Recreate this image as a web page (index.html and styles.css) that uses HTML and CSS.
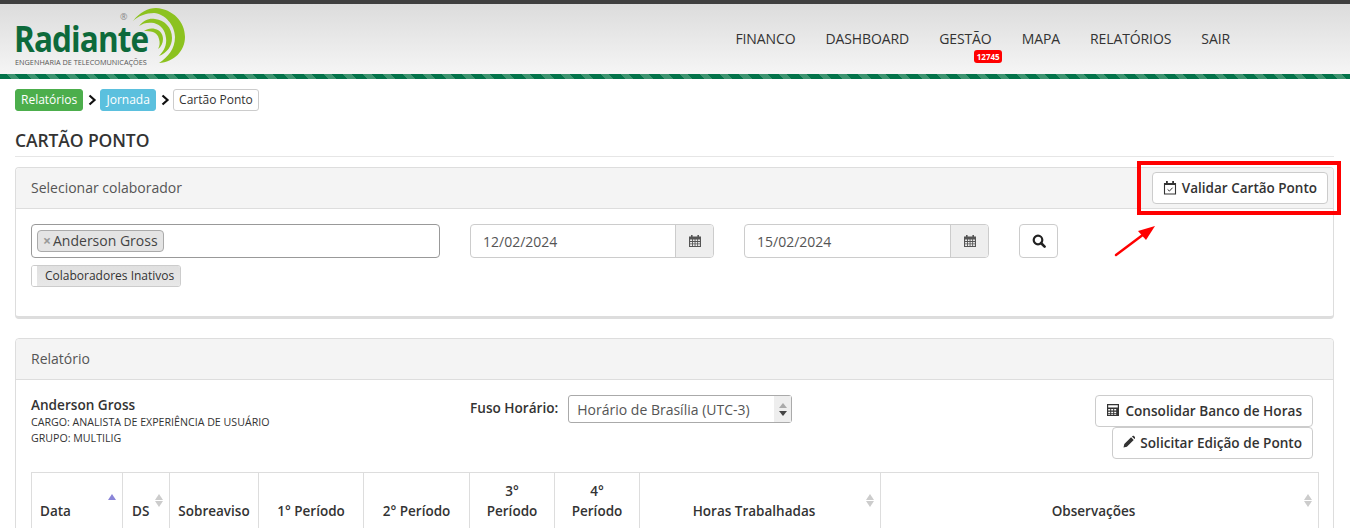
FILE: index.html
```html
<!DOCTYPE html>
<html lang="pt-BR">
<head>
  <meta charset="UTF-8" />
  <title>Cartão Ponto</title>
  <link rel="stylesheet" href="styles.css">
</head>
<body>
  <header class="topbar">
    <div class="logo">
      <span class="logo-name">Radiante</span>
      <span class="logo-sub">ENGENHARIA DE TELECOMUNICAÇÕES</span>
      <span class="logo-reg">®</span>
      <svg class="logo-arcs" viewBox="0 0 70 65" width="70" height="65">
        <path fill="#8cc21f" d="M13 16C20 7 28 3 36 3C53 4 65 17 65 32C65 46 54 57 39 58C48 52 55 44 55 32C55 20 45 9 34 8C26 8 18 11 13 16Z"/>
        <path fill="#8cc21f" d="M19 21C24 15 29 13 35 14C45 15 52 23 52 33C52 41 47 48 39 51C44 46 47 40 46 33C45 25 41 20 34 18C28 17 23 18 19 21Z"/>
        <path fill="#8cc21f" d="M24 26C27 24 31 23 35 24C40 25 43 29 43 34C43 38 41 42 38 44C40 41 40 37 39 34C38 30 36 28 33 27C30 26 27 26 24 26Z"/>
      </svg>
    </div>
    <nav class="menu">
      <a>Financo</a>
      <a>Dashboard</a>
      <a class="has-badge">Gestão<span class="badge">12745</span></a>
      <a>Mapa</a>
      <a>Relatórios</a>
      <a>Sair</a>
    </nav>
  </header>
  <div class="stripes"></div>

  <main class="content">
    <div class="crumbs">
      <span class="crumb crumb-green">Relatórios</span>
      <svg class="chev" viewBox="0 0 10 12" width="10" height="12"><path d="M2.5 1.5L7.5 6L2.5 10.5" /></svg>
      <span class="crumb crumb-blue">Jornada</span>
      <svg class="chev" viewBox="0 0 10 12" width="10" height="12"><path d="M2.5 1.5L7.5 6L2.5 10.5" /></svg>
      <span class="crumb crumb-plain">Cartão Ponto</span>
    </div>

    <h1 class="page-title">CARTÃO PONTO</h1>

    <section class="panel panel-select">
      <div class="panel-head">
        <span>Selecionar colaborador</span>
        <button class="btn btn-validate">
          <svg viewBox="0 0 14 15" width="14" height="15" class="ico"><path fill="none" stroke="#333" stroke-width="1.100" d="M1.500 3.500h11v10.500h-11z"/><path fill="#333" d="M1 3h12v2H1zM3 1h1.800v3H3zM9.200 1H11v3H9.200z"/><path fill="none" stroke="#333" d="M4.600 9.400l1.800 1.700 3.200-3.400"/></svg>
          Validar Cartão Ponto
        </button>
      </div>
      <div class="panel-body select-body">
        <div class="select-left">
          <div class="tag-input"><span class="tag"><i>×</i>Anderson Gross</span></div>
          <div class="toggle"><span class="toggle-knob"></span><span class="toggle-label">Colaboradores Inativos</span></div>
        </div>
        <div class="date-group">
          <span class="date-value">12/02/2024</span>
          <span class="date-addon"><svg viewBox="0 0 14 14" width="14" height="14"><use href="#cal"/></svg></span>
        </div>
        <div class="date-group">
          <span class="date-value">15/02/2024</span>
          <span class="date-addon"><svg viewBox="0 0 14 14" width="14" height="14"><use href="#cal"/></svg></span>
        </div>
        <button class="btn btn-search">
          <svg viewBox="0 0 14 14" width="14" height="14"><circle cx="6" cy="6" r="4.300" fill="none" stroke="#222" stroke-width="2.200"/><path d="M9 9l3.600 3.600" stroke="#222" stroke-width="2.600" stroke-linecap="round"/></svg>
        </button>
      </div>
    </section>

    <section class="panel panel-report">
      <div class="panel-head panel-head-plain"><span>Relatório</span></div>
      <div class="panel-body">
        <div class="report-top">
          <div class="person">
            <div class="person-name">Anderson Gross</div>
            <div class="person-meta">CARGO: ANALISTA DE EXPERIÊNCIA DE USUÁRIO</div>
            <div class="person-meta">GRUPO: MULTILIG</div>
          </div>
          <div class="zone">
            <span class="zone-label">Fuso Horário:</span>
            <div class="zone-select">
              <span>Horário de Brasília (UTC-3)</span>
              <span class="zone-spin"><b class="up"></b><b class="down"></b></span>
            </div>
          </div>
          <div class="report-actions">
            <button class="btn">
              <svg viewBox="0 0 14 14" width="14" height="14" class="ico"><path fill="#333" d="M1 1h12v12H1zM2.200 2.200v2.400h9.600V2.200zM2.200 6v1.600h2V6zm3 0v1.600h2V6zm3 0v1.600h2V6zm-6 2.800v1.400h2V8.800zm3 0v1.400h2V8.800zm3 0v1.400h2V8.800zm-6 2.400v.7h2v-.7zm3 0v.7h2v-.7zm3 0v.7h2v-.7z" fill-rule="evenodd"/></svg>
              Consolidar Banco de Horas
            </button>
            <button class="btn">
              <svg viewBox="1 0 12 14" width="12" height="14" class="ico"><path fill="#333" d="M1.500 12.500l.8-3.400 6.800-6.800 2.600 2.600-6.800 6.800zM9.900 1.500l.8-.6c.4-.3.900-.3 1.200 0l1.200 1.200c.3.3.3.8 0 1.200l-.6.800z"/></svg>
              Solicitar Edição de Ponto
            </button>
          </div>
        </div>

        <table class="grid">
          <thead>
            <tr>
              <th class="col-data th-left">Data<span class="sort sort-active"><b class="up"></b></span></th>
              <th class="col-ds th-left">DS<span class="sort"><b class="up"></b><b class="down"></b></span></th>
              <th class="col-sob">Sobreaviso</th>
              <th class="col-p1">1° Período</th>
              <th class="col-p2">2° Período</th>
              <th class="col-p3">3°<br>Período</th>
              <th class="col-p4">4°<br>Período</th>
              <th class="col-horas has-sort">Horas Trabalhadas<span class="sort"><b class="up"></b><b class="down"></b></span></th>
              <th class="col-obs has-sort">Observações<span class="sort"><b class="up"></b><b class="down"></b></span></th>
            </tr>
          </thead>
        </table>
      </div>
    </section>
  </main>

  <!-- destaque desenhado por cima do print -->
  <div class="callout"></div>
  <svg class="callout-arrow" viewBox="0 0 44 36" width="44" height="36">
    <path d="M2 33L30 12" stroke="#f00" stroke-width="2.400" stroke-linecap="round"/>
    <path fill="#f00" d="M41 4L24 9L32 18Z"/>
  </svg>

  <svg class="defs" width="0" height="0">
    <symbol id="cal" viewBox="0 0 14 14">
      <path fill="#555" fill-rule="evenodd" d="M1 2.400h2V1h1.600v1.400h4.800V1H11v1.400h2V13H1zM2.100 5.400v1.600h1.900V5.400zm2.800 0v1.600h1.700V5.400zm2.600 0v1.600h1.700V5.400zm2.600 0v1.600h1.800V5.400zM2.100 7.900v1.500h1.900V7.900zm2.800 0v1.500h1.700V7.900zm2.600 0v1.500h1.700V7.900zm2.600 0v1.500h1.800V7.900zM2.100 10.200v1.700h1.900v-1.700zm2.800 0v1.700h1.700v-1.700zm2.600 0v1.700h1.700v-1.700zm2.600 0v1.700h1.800v-1.700z"/>
    </symbol>
  </svg>
</body>
</html>
```

FILE: styles.css
```css
* {
  box-sizing: border-box;
}
html {
  height: 100%;
  overflow: hidden;
}
body {
  margin: 0;
  height: 100%;
  overflow: hidden;
  position: relative;
  background: #fff;
  color: #333;
  font-family: "Open Sans", sans-serif;
  font-size: 14px;
}
.topbar {
  height: 74px;
  border-top: 4px solid #3f3f3f;
  background: linear-gradient(to bottom, #dcdcdc, #f5f5f5);
  display: flex;
  align-items: center;
  justify-content: space-between;
}
.stripes {
  height: 5px;
  background: repeating-linear-gradient(45deg, #03734a 0 8px, #3d9470 8px 14px);
}
.logo {
  position: relative;
  width: 190px;
  height: 70px;
}
.logo-name {
  position: absolute;
  left: 14px;
  top: 18px;
  font-size: 35px;
  line-height: 34px;
  font-weight: 700;
  letter-spacing: -1px;
  color: #0d6a3b;
  transform: scaleX(0.9);
  transform-origin: left center;
}
.logo-sub {
  position: absolute;
  left: 15px;
  top: 53px;
  font-size: 7.300px;
  line-height: 10px;
  color: #555;
  white-space: nowrap;
}
.logo-reg {
  position: absolute;
  left: 120px;
  top: 8px;
  font-size: 9px;
  line-height: 10px;
  color: #888;
}
.logo-arcs {
  position: absolute;
  left: 120px;
  top: 1px;
}
.menu {
  display: flex;
  gap: 30px;
  padding-right: 120px;
  margin-top: -1px;
}
.menu a {
  position: relative;
  text-transform: uppercase;
  color: #333;
  font-size: 14px;
  line-height: 20px;
  letter-spacing: -0.1px;
}
.badge {
  position: absolute;
  left: 35px;
  top: 21px;
  width: 28px;
  height: 13px;
  background: #f00;
  border-radius: 3px;
  color: #fff;
  font-size: 8px;
  font-weight: 700;
  line-height: 13px;
  letter-spacing: 0;
  text-align: center;
}
.content {
  padding: 10px 16px 0 15px;
}
.crumbs {
  display: flex;
  align-items: center;
  height: 22px;
  gap: 3.500px;
}
.crumb {
  font-size: 12px;
  line-height: 20px;
  height: 22px;
  padding: 0 5px;
  border-radius: 3px;
  border: 1px solid transparent;
}
.crumb-green {
  background: #4cae4c;
  color: #fff;
  border-color: #4cae4c;
}
.crumb-blue {
  background: #5bc0de;
  color: #fff;
  border-color: #5bc0de;
  padding: 0 5.250px;
}
.crumb-plain {
  background: #fff;
  color: #333;
  border-color: #ccc;
}
.chev {
  fill: none;
  stroke: #111;
  stroke-width: 2.200;
}
.page-title {
  margin: 17px 0 0;
  padding-bottom: 3px;
  font-size: 17.500px;
  line-height: 25px;
  font-weight: 600;
  letter-spacing: -0.1px;
  color: #333;
  border-bottom: 1px solid #e6e6e6;
}
.panel {
  border: 1px solid #ddd;
  border-radius: 4px;
  background: #fff;
}
.panel-select {
  margin-top: 10px;
  height: 152px;
  border-bottom-width: 3px;
}
.panel-report {
  margin-top: 19px;
}
.panel-head {
  height: 41px;
  background: #f4f4f4;
  border-bottom: 1px solid #ddd;
  border-radius: 4px 4px 0 0;
  padding: 0 5px 1px 15px;
  display: flex;
  align-items: center;
  justify-content: space-between;
  font-size: 14px;
  color: #555;
}
.btn {
  font-family: inherit;
  font-size: 14px;
  color: #333;
  background: #fff;
  border: 1px solid #ccc;
  border-radius: 4px;
  height: 32px;
  padding: 0 10px;
  display: inline-flex;
  align-items: center;
  gap: 5px;
  white-space: nowrap;
}
.ico {
  flex: none;
}
.btn-validate {
  font-weight: 600;
  font-size: 13.500px;
}
.panel-body {
  padding: 15px;
}
.select-body {
  display: flex;
  align-items: flex-start;
}
.select-left {
  width: 409px;
  margin-right: 30px;
}
.tag-input {
  height: 34px;
  border: 1px solid #999;
  border-radius: 4px;
  padding: 5px;
}
.tag {
  display: block;
  width: fit-content;
  height: 22px;
  line-height: 20px;
  background: #e4e4e4;
  border: 1px solid #aaa;
  border-radius: 4px;
  padding: 0 5px;
  font-size: 14px;
  color: #444;
}
.tag i {
  font-style: normal;
  font-weight: 700;
  color: #999;
  margin-right: 2px;
}
.toggle {
  display: flex;
  width: fit-content;
  margin-top: 7px;
  height: 22px;
  border: 1px solid #ccc;
  border-radius: 3px;
  overflow: hidden;
}
.toggle-knob {
  width: 5px;
  background: #fff;
}
.toggle-label {
  background: linear-gradient(to bottom, #e0e0e0, #e8e8e8);
  font-size: 12px;
  line-height: 20px;
  padding: 0 6px 0 8px;
}
.date-group {
  display: flex;
  width: 244px;
  height: 34px;
  margin-right: 30px;
  border: 1px solid #ccc;
  border-radius: 4px;
  overflow: hidden;
}
.date-group + .date-group {
  width: 245px;
}
.date-value {
  flex: 1;
  padding-left: 12px;
  line-height: 33px;
  font-size: 14px;
  color: #555;
}
.date-addon {
  width: 38px;
  background: #eee;
  border-left: 1px solid #ccc;
  display: flex;
  align-items: center;
  justify-content: center;
}
.btn-search {
  width: 39px;
  height: 34px;
  padding: 0;
  justify-content: center;
}
.report-top {
  display: flex;
  align-items: flex-start;
  height: 77px;
}
.person {
  width: 439px;
}
.person-name {
  margin-top: 1px;
  font-size: 13.600px;
  line-height: 18px;
  font-weight: 600;
}
.person-meta {
  font-size: 10.650px;
  line-height: 16px;
}
.zone {
  display: flex;
  align-items: flex-start;
  gap: 10px;
}
.zone-label {
  font-weight: 600;
  font-size: 13.600px;
  line-height: 26px;
}
.zone-select {
  width: 224px;
  height: 28px;
  border: 1px solid #aaa;
  border-radius: 3px;
  padding-left: 8px;
  display: flex;
  align-items: center;
  justify-content: space-between;
  font-size: 14px;
  color: #555;
}
.zone-spin {
  width: 17px;
  height: 26px;
  background: #eee;
  display: flex;
  flex-direction: column;
  align-items: center;
  justify-content: center;
  gap: 3px;
}
.zone-spin .up {
  border-left: 4px solid transparent;
  border-right: 4px solid transparent;
  border-bottom: 5px solid #aaa;
}
.zone-spin .down {
  border-left: 4px solid transparent;
  border-right: 4px solid transparent;
  border-top: 5px solid #444;
}
.report-actions {
  margin-left: auto;
  display: flex;
  flex-direction: column;
  align-items: flex-end;
  margin-right: 5px;
}
.report-actions .btn {
  gap: 5px;
  padding-bottom: 2px;
  font-size: 13.600px;
  font-weight: 600;
}
.grid {
  width: 1288px;
  table-layout: fixed;
  border-collapse: collapse;
}
.grid th {
  position: relative;
  border: 1px solid #ddd;
  height: 76px;
  padding: 8px;
  vertical-align: top;
  line-height: 20px;
  font-size: 13.500px;
  font-weight: 600;
  text-align: center;
  color: #333;
}
.grid th:not(.col-p3):not(.col-p4) {
  padding-top: 28px;
}
.grid .th-left {
  text-align: left;
}
.grid .has-sort {
  padding-right: 20px;
}
.grid .col-ds {
  padding-left: 9px;
}
.col-data { width: 91px; }
.col-ds { width: 47px; }
.col-sob { width: 89px; }
.col-p1 { width: 105px; }
.col-p2 { width: 106px; }
.col-p3 { width: 85px; }
.col-p4 { width: 85px; }
.col-horas { width: 241px; }
.sort {
  position: absolute;
  right: 6px;
  top: 21px;
  display: flex;
  flex-direction: column;
  gap: 1px;
}
.sort .up {
  border-left: 4px solid transparent;
  border-right: 4px solid transparent;
  border-bottom: 6px solid #ccc;
}
.sort .down {
  border-left: 4px solid transparent;
  border-right: 4px solid transparent;
  border-top: 6px solid #ccc;
}
.sort-active .up {
  border-bottom-color: #8a85d8;
}
.callout {
  position: absolute;
  left: 1137px;
  top: 161px;
  width: 204px;
  height: 54px;
  border: 4px solid #f00;
}
.callout-arrow {
  position: absolute;
  left: 1114px;
  top: 222px;
}
.defs {
  position: absolute;
}
```
